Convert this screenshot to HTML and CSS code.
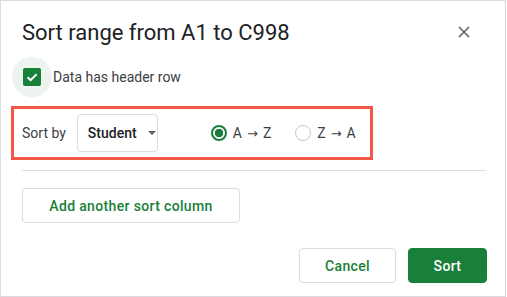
FILE: index.html
```html
<!DOCTYPE html>
<html lang="en">
<head>
<meta charset="utf-8" />
<meta name="viewport" content="width=device-width,initial-scale=1" />
<title>Sort range</title>
<link rel="stylesheet" href="styles.css">
</head>
<body>
<div class="dialog">
  <div class="head">
    <h1>Sort range from A1 to C998</h1>
    <button type="button" class="close" aria-label="Close">
      <svg width="12" height="12" viewBox="0 0 12 12"><path d="M1 1L11 11M11 1L1 11" stroke="#5f6368" stroke-width="1.6" fill="none"/></svg>
    </button>
  </div>

  <label class="check">
    <span class="halo"><span class="box">
      <svg width="14" height="14" viewBox="0 0 14 14"><path d="M2.5 7.2L5.6 10.2L11.6 4.2" stroke="#fff" stroke-width="2" fill="none"/></svg>
    </span></span>
    Data has header row
  </label>

  <div class="sort-row">
    <span class="lbl">Sort by</span>
    <div class="select">Student <span class="caret"></span></div>
    <div class="radios">
      <label class="radio on"><span class="dot"></span><span>A<span class="arr">→</span>Z</span></label>
      <label class="radio"><span class="dot"></span><span>Z<span class="arr">→</span>A</span></label>
    </div>
  </div>

  <hr class="divider">

  <button type="button" class="btn">Add another sort column</button>

  <div class="actions">
    <button type="button" class="btn cancel">Cancel</button>
    <button type="button" class="btn primary">Sort</button>
  </div>
</div>
</body>
</html>
```

FILE: styles.css
```css
body{margin:0;background:#fff;font-family:Roboto,"Liberation Sans",sans-serif;color:#3c4043;}
.dialog{box-sizing:border-box;width:506px;height:297px;border:1px solid #dadce0;border-right-color:#d5d5d5;padding:18px 19px 0 21px;}
.head{display:flex;align-items:center;justify-content:space-between;height:28px;}
h1{margin:0;font-size:22px;line-height:28px;font-weight:400;color:#202124;}
.close{border:0;background:none;padding:0;width:24px;height:24px;display:flex;align-items:center;justify-content:center;margin-right:10px;margin-top:-2px;cursor:pointer;}
.check{display:flex;align-items:center;margin:10px 0 0 -10px;font-size:14px;}
.halo{width:40px;height:40px;border-radius:50%;background:#edf4ef;display:flex;align-items:center;justify-content:center;margin-right:1px;}
.box{width:18px;height:18px;border-radius:2px;background:#188038;display:flex;align-items:center;justify-content:center;}
.sort-row{display:flex;align-items:center;box-sizing:border-box;width:362px;height:54px;margin:9px 0 0 -11px;border:3px solid #f4564a;padding:0 0 0 8px;font-size:14px;white-space:nowrap;}
.lbl{margin-right:11px;flex-shrink:0;}
.select{display:flex;align-items:center;flex-shrink:0;box-sizing:border-box;width:81px;height:38px;border:1px solid #dadce0;border-radius:4px;padding:0 0 0 10px;color:#202124;font-weight:500;}
.caret{margin-left:11px;border-left:4px solid transparent;border-right:4px solid transparent;border-top:4px solid #5f6368;}
.radios{display:flex;margin-left:53px;gap:24px;}
.radio{display:flex;align-items:center;gap:6px;}
.arr{font-family:"DejaVu Sans",sans-serif;font-size:13px;margin:0 5px;}
.dot{box-sizing:border-box;width:16px;height:16px;border-radius:50%;border:1.5px solid #c6c9cc;}
.radio.on .dot{border:2px solid #188038;background:radial-gradient(circle,#188038 0 4px,transparent 4.5px);}
.divider{border:0;border-top:1px solid #dadce0;margin:10px 0 0;width:464px;}
.btn{font:inherit;font-size:14px;font-weight:500;letter-spacing:.35px;cursor:pointer;box-sizing:border-box;height:35px;border:1px solid #dadce0;border-radius:4px;background:#fff;color:#188038;}
.divider + .btn{width:218px;margin-top:17px;}
.actions{display:flex;justify-content:flex-end;gap:12px;margin:25px 0 0;width:465px;}
.cancel{width:97px;}
.primary{width:79px;background:#188038;border-color:#188038;color:#fff;}
```
